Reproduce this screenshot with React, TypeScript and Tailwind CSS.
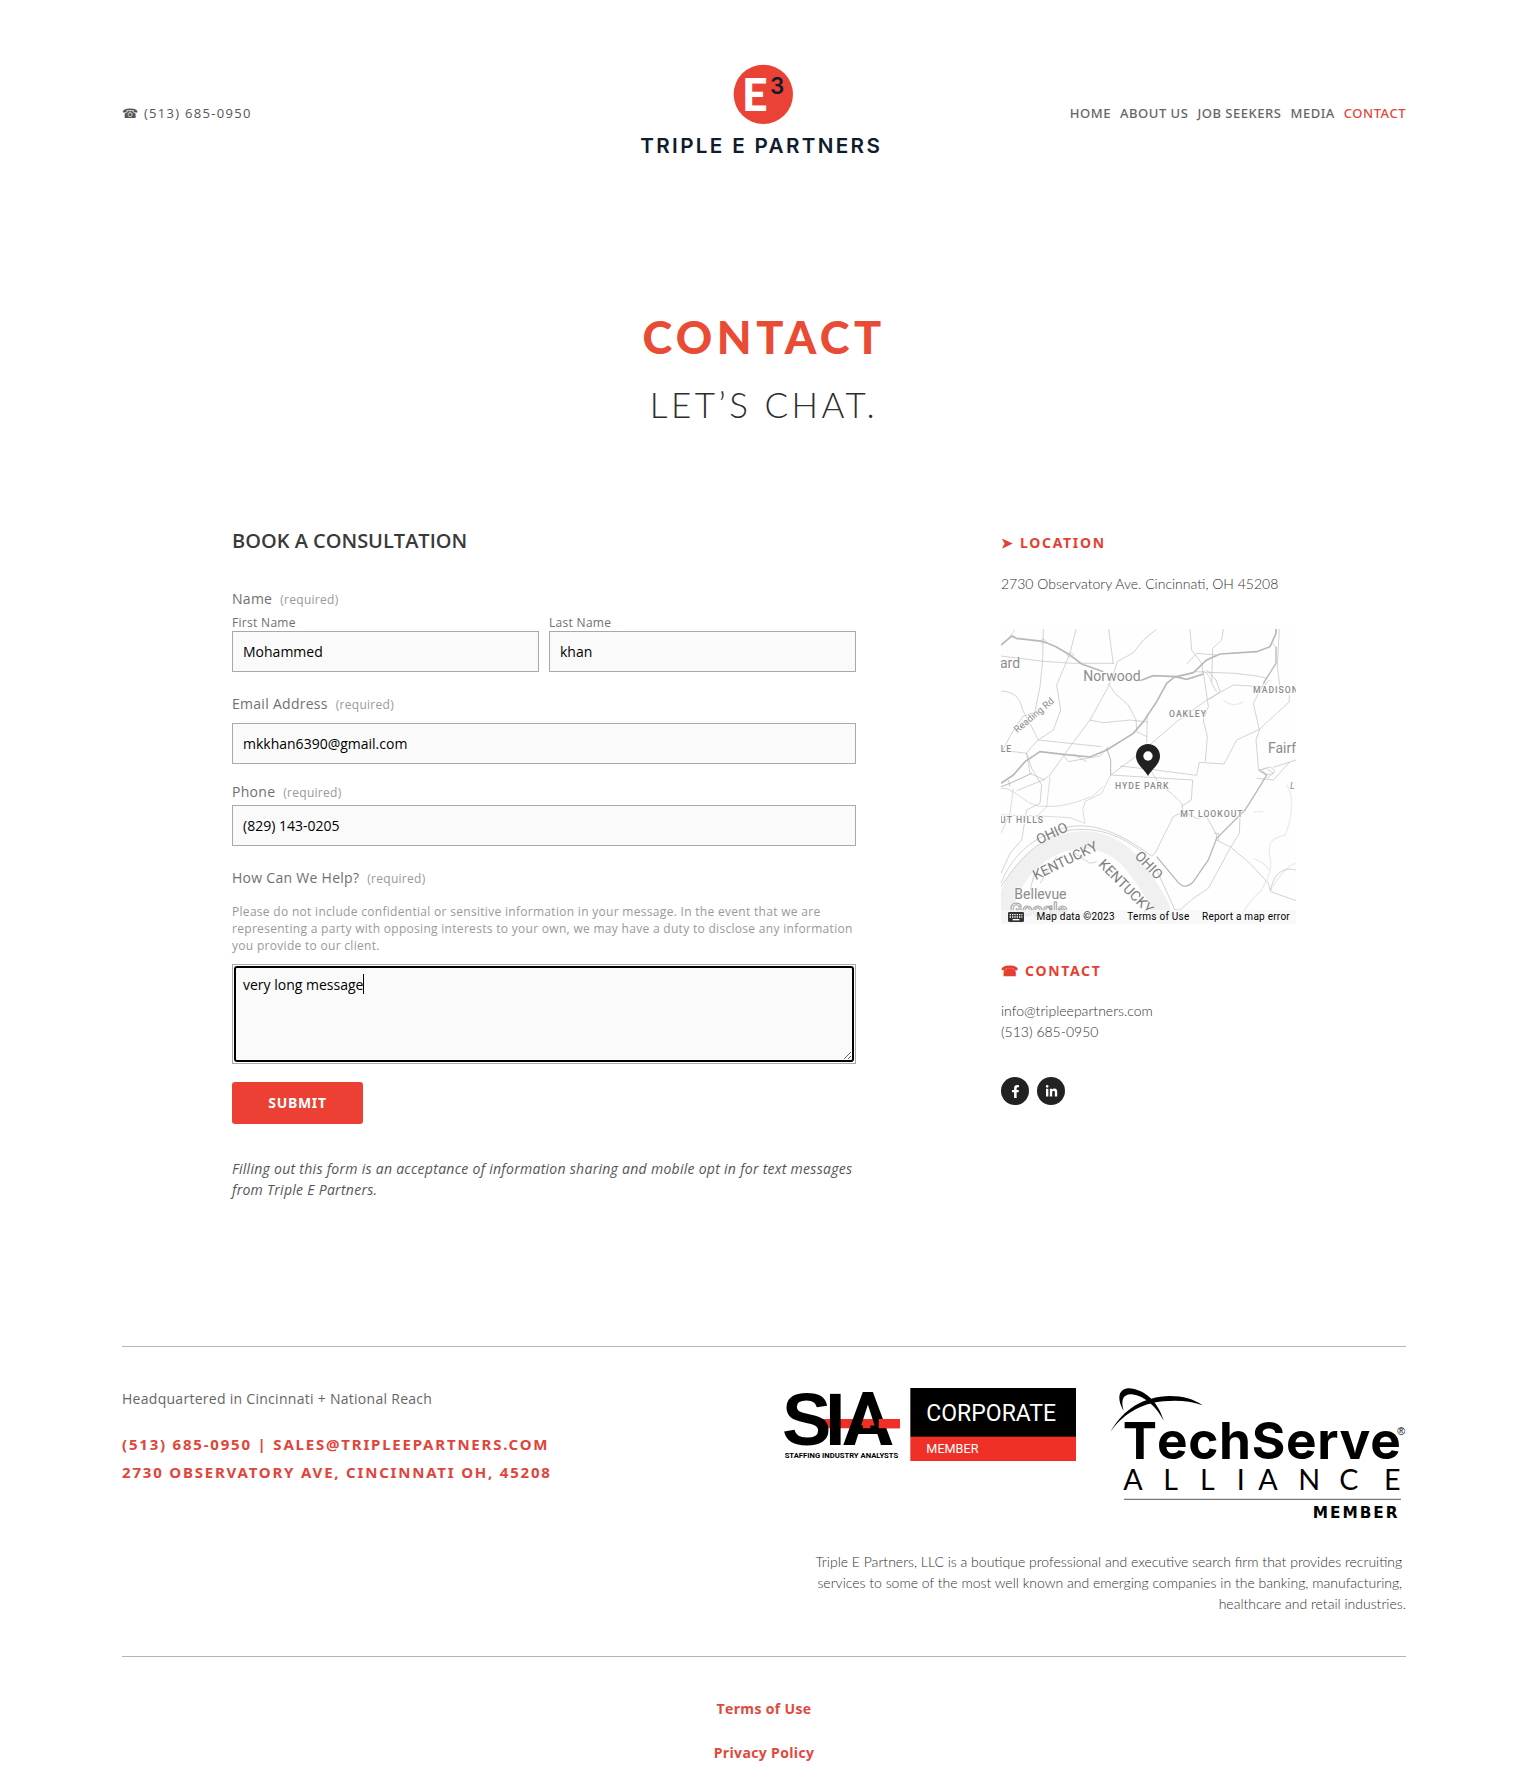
import React, { useState } from 'react';
import { FaFacebookF, FaLinkedinIn } from 'react-icons/fa';

const NAV = ['Home', 'About Us', 'Job Seekers', 'Media', 'Contact'];

function BrandLogo() {
  return (
    <svg viewBox="60 66 747 306" className="h-[102px] w-[249px]" role="img" aria-label="Triple E Partners">
      <circle cx="430" cy="163" r="89" fill="#ea4335" />
      <text x="366" y="212" fontFamily="Lato" fontWeight="900" fontSize="134" fill="#fff">E</text>
      <text x="450" y="163" fontFamily="Inter" fontWeight="600" fontSize="67" fill="#101c2e">3</text>
      <text x="61" y="340" fontFamily="Inter" fontWeight="600" fontSize="62" letterSpacing="7" fill="#101c2e">TRIPLE E PARTNERS</text>
    </svg>
  );
}

function LocationMap() {
  return (
    <div className="relative aspect-square w-full overflow-hidden">
      <svg viewBox="33 327 885 885" className="block h-full w-full" role="img" aria-label="Map of Hyde Park, Cincinnati">
        <rect x="33" y="327" width="885" height="885" fill="#fefefe" />
        <path d="M35 1200C60 1050 170 958 285 960C390 963 440 1040 490 1120C515 1160 525 1190 530 1225" fill="none" stroke="#f0f0f0" strokeWidth="52" />
        <path d="M30 1120V1215H120C60 1190 50 1150 62 1105Z" fill="#f0f0f0" />
        <path d="M918 1030C890 1035 860 1080 840 1112M890 795C915 830 905 900 885 945C850 955 835 960 838 1000C850 1050 835 1070 815 1110C780 1140 755 1180 745 1212M700 540q30 25 60 5M790 875h30M790 1015q40 15 50 40" fill="none" stroke="#ececec" strokeWidth="4" />
        <g fill="none" stroke="#bdbdbd" strokeWidth="2">
          <path d="M33 408L160 424L250 430H372M160 327L158 420L150 500L134 580M258 327L240 400L200 495L212 570L190 630L142 662L108 700M356 327L370 432M500 327L460 360L430 398L382 425L368 470L355 500L300 600L240 680L180 765L160 780L80 812" />
          <path d="M355 490L375 520L415 555L438 600L440 635M33 513C70 515 90 530 98 570L130 630L145 660L240 670L335 680M33 700L65 640L98 590L135 575M33 690L110 700L125 745L155 795L150 850L110 870L95 960L60 1000L33 1060" />
          <path d="M298 600L340 608L420 600L472 606M472 590L470 670M440 635L470 650M485 670L560 605L650 540L730 495L820 500L838 480M362 765L430 715L485 670M362 765L608 780L604 840L575 858M390 738L480 748L620 766L628 727L702 732L740 660L808 628L860 580L898 545V525" />
          <path d="M362 765L335 820L285 845L278 870L285 910M33 805C70 800 100 850 145 858C220 865 260 845 305 830L340 800M180 770L170 860L140 890M70 805L60 880L33 940M33 885L150 888L240 893L285 910" opacity=".8" />
          <path d="M480 748L510 795L545 820L575 850L580 875L550 890L495 1000L485 1008M575 870L620 895L650 890L680 945L678 960L720 980L780 1030L835 1090L842 1115L918 1142M750 890L748 940L720 985L655 1105L610 1135L570 1170H555L500 1050" />
          <path d="M33 1090C60 1020 120 945 240 920C330 905 420 960 485 1008M33 1100C80 1030 130 965 230 932C340 915 410 960 470 1005M600 327L605 390L635 430L645 490L655 560L640 600L652 650L646 725M700 327L695 360L668 385L665 490L680 515M868 327L862 440L870 500" />
          <path d="M590 433L620 400L680 405M615 455L735 460L800 468L830 475M655 540L690 515L678 480L650 450M830 475L790 550L808 630L798 660L806 750L830 745L850 760L830 775M918 720L850 742M800 775L850 780L900 725M842 1112C850 1060 880 1040 918 1050M110 700L120 760L165 780M60 800L55 780" />
          <path d="M255 1000L300 1030L320 1025M150 1090L200 1010M135 1055L120 1110M220 705L235 725L330 708L355 680M672 940h14v24M250 702L290 725" />
        </g>
        <g fill="none" stroke="#b8b8b8" strokeWidth="5">
          <path d="M33 375L65 348L80 355L158 364L198 380L240 405L275 432L340 455M450 482L490 467L560 470L610 458L650 420L690 402L800 395L840 380L858 340V327" />
          <path d="M33 790L70 765L105 725L150 695L220 703L300 711L350 690L430 640L460 605L500 545L530 490L555 470L590 478L640 462" />
          <path d="M858 380V430L820 490M806 750L830 765L800 815L765 870L680 955L655 1020L610 1085Q585 1110 565 1088L500 1010" strokeWidth="4" />
          <path d="M350 685L362 720V765M33 800L60 790L125 760" strokeWidth="3" />
        </g>
        <path d="M60 350L75 330M65 345L85 360M150 364q10-14 18 0q-8 12-18 0M230 405q12-14 22 0q-10 12-22 0M845 365l15 20M635 455q20 0 28 30M815 750q30-20 40 5q-20 20-40-5" fill="none" stroke="#c4c4c4" strokeWidth="2" />
        <g fontFamily="Roboto" fill="#8c8c8c" stroke="#fefefe" strokeWidth="5" paintOrder="stroke">
          <text x="30" y="444" fontSize="42">ard</text>
          <text x="280" y="484" fontSize="42">Norwood</text>
          <text x="834" y="699" fontSize="42">Fairf</text>
          <text x="73" y="1137" fontSize="42">Bellevue</text>
          <text x="900" y="806" fontSize="28" fontStyle="italic">L</text>
          <g fontSize="26" letterSpacing="3" fontWeight="500">
            <text x="789" y="519">MADISON</text>
            <text x="537" y="591">OAKLEY</text>
            <text x="375" y="807">HYDE PARK</text>
            <text x="571" y="891">MT LOOKOUT</text>
            <text x="32" y="696">LE</text>
            <text x="30" y="909">UT HILLS</text>
          </g>
          <text transform="translate(82 640) rotate(-40)" fontSize="29">Reading Rd</text>
          <g fontSize="42" fill="#7d7d7d" stroke="none">
            <text transform="translate(147 974) rotate(-25)">OHIO</text>
            <text transform="translate(137 1081) rotate(-26)">KENTUCKY</text>
            <text transform="translate(323 1035) rotate(45)">KENTUCKY</text>
            <text transform="translate(432 1010) rotate(46)">OHIO</text>
          </g>
        </g>
        <text x="60" y="1188" fontFamily="Roboto" fontWeight="500" fontSize="54" fill="#fff" stroke="#a0a0a0" strokeWidth="3">Google</text>
        <path d="M474 672c-20 0-36 16-36 36c0 26 24 38 36 60c12-22 36-34 36-60c0-20-16-36-36-36z" fill="#212121" />
        <circle cx="474" cy="708" r="14" fill="#fff" />
      </svg>
      <div className="absolute inset-x-0 bottom-0 flex h-[14px] items-center justify-between bg-[#f7f7f7]/80 pr-[6px] pl-[7px] font-['Roboto'] text-[10px] leading-[14px] tracking-wide whitespace-nowrap text-black">
        <button type="button" aria-label="Keyboard shortcuts">
          <svg viewBox="0 0 48 30" className="block h-[10px] w-4">
            <rect width="48" height="30" rx="4" fill="#333" />
            <path d="M5 8h38M5 15h38" stroke="#fff" strokeWidth="4" strokeDasharray="4 3" />
            <path d="M14 23h20" stroke="#fff" strokeWidth="4" />
          </svg>
        </button>
        <span>Map data ©2023</span>
        <a href="#map-terms">Terms of Use</a>
        <a href="#map-error">Report a map error</a>
      </div>
    </div>
  );
}

function SiaLogo() {
  return (
    <svg viewBox="42 55 876 219" className="h-[73px] w-[292px]" role="img" aria-label="SIA Staffing Industry Analysts Corporate Member">
      <path d="M150 148H390V176H150Z" fill="#ee3026" />
      <g fontWeight="700" fontSize="222" fill="#000">
        <text x="36" y="225" fontFamily="Liberation Sans">S</text>
        <text x="165" y="225" fontFamily="Liberation Sans">I</text>
        <text x="219" y="225" fontFamily="Roboto">A</text>
      </g>
      <path d="M326 148H390V176H326ZM279 148h22v28h-22z" fill="#ee3026" />
      <text x="44" y="265" fontFamily="Roboto" fontWeight="700" fontSize="23" fill="#000">STAFFING INDUSTRY ANALYSTS</text>
      <rect x="421" y="55" width="497" height="147" fill="#000" />
      <rect x="421" y="201" width="497" height="73" fill="#ee3026" />
      <text x="469" y="153" fontFamily="Roboto" fontSize="69" fill="#fff">CORPORATE</text>
      <text x="469" y="251" fontFamily="Roboto" fontSize="38" fill="#fff">MEMBER</text>
    </svg>
  );
}

function TechServeLogo() {
  return (
    <svg viewBox="60 52 888 399" className="h-[133px] w-[296px]" role="img" aria-label="TechServe Alliance Member">
      <path d="M61 184C100 115 160 78 240 76C280 76 310 85 338 104C300 90 260 88 220 92C150 98 95 135 61 184Z" fill="#000" />
      <path d="M101 120C80 85 85 55 115 53C165 55 205 95 221 150C200 110 165 75 125 71C98 70 92 90 101 120Z" fill="#000" />
      <g fill="#000">
        <text y="265" fontFamily="Inter" fontWeight="700" fontSize="154">
          <tspan x="98">T</tspan><tspan x="201" letterSpacing="2">echServe</tspan>
        </text>
        <text y="358" fontSize="86" x="100 220 330 440 505 625 748 882" fontFamily="Lato">ALLIANCE</text>
        <text x="922" y="192" fontFamily="Liberation Sans" fontSize="32">®</text>
      </g>
      <path d="M102 386H933" stroke="#777" strokeWidth="4" />
      <text x="668" y="443" fontFamily="DejaVu Sans" fontWeight="700" fontSize="46" letterSpacing="6" fill="#000">MEMBER</text>
    </svg>
  );
}

const labelClass = 'block text-sm leading-5 tracking-[0.02em] text-[#707070]';
const inputClass = 'block h-[41px] w-full border border-[#a9a9a9] bg-[#fafafa] px-[10px] text-sm text-black outline-none';
const sideHeading = "font-['Noto_Sans'] text-sm leading-6 font-bold tracking-[0.12em] text-[#e63f33] uppercase";
const thinText = "font-['Lato'] text-sm leading-[21px] font-light text-[#333]";

function Required() {
  return <span className="ml-2 text-xs text-[#999]">(required)</span>;
}

export default function App() {
  const [message, setMessage] = useState('very long message');

  return (
    <div className="min-h-screen bg-white pr-[107px] pb-[25px] pl-[122px] font-['Open_Sans',sans-serif]">
      <header className="grid grid-cols-[1fr_auto_1fr] items-center pt-[62px]">
        <a href="tel:5136850950" className="text-[13px] leading-5 tracking-widest text-[#555]">☎ (513) 685-0950</a>
        <a href="#home"><BrandLogo /></a>
        <nav className="flex justify-end gap-[9px] font-['Noto_Sans'] text-[13px] leading-5 font-medium tracking-[0.04em] whitespace-nowrap text-[#666] uppercase">
          {NAV.map((item) => (
            <a key={item} href={`#${item.toLowerCase().replace(' ', '-')}`} className={item === 'Contact' ? 'text-[#e0483c]' : ''}>{item}</a>
          ))}
        </nav>
      </header>

      <main>
        <div className="mt-[145px] text-center font-['Lato']">
          <h1 className="text-[45px] leading-[56px] font-black tracking-widest text-[#e94b35] uppercase">Contact</h1>
          <p className="mt-[15px] text-[35px] leading-[48px] font-light tracking-widest text-[#2d2d2d] uppercase">Let’s chat.</p>
        </div>

        <div className="mx-auto mt-[99px] grid max-w-[1064px] grid-cols-[minmax(0,1fr)_295px] gap-[145px]">
          <form onSubmit={(e) => e.preventDefault()}>
            <h2 className="text-xl leading-7 font-semibold text-[#3a3a3a]">BOOK A CONSULTATION</h2>
            <fieldset className="mt-[34px]">
              <legend className={labelClass}>Name<Required /></legend>
              <div className="mt-[6px] grid grid-cols-2 gap-[10px]">
                <label className="block text-xs leading-4 tracking-wide text-[#707070]">First Name
                  <input className={`${inputClass} tracking-normal`} type="text" defaultValue="Mohammed" />
                </label>
                <label className="block text-xs leading-4 tracking-wide text-[#707070]">Last Name
                  <input className={`${inputClass} tracking-normal`} type="text" defaultValue="khan" />
                </label>
              </div>
            </fieldset>
            <label htmlFor="email" className={`${labelClass} mt-[22px]`}>Email Address<Required /></label>
            <input id="email" className={`${inputClass} mt-[9px]`} type="email" defaultValue="mkkhan6390@gmail.com" />
            <label htmlFor="phone" className={`${labelClass} mt-[18px]`}>Phone<Required /></label>
            <input id="phone" className={`${inputClass} mt-[3px]`} type="tel" defaultValue="(829) 143-0205" />
            <label htmlFor="message" className={`${labelClass} mt-[22px]`}>How Can We Help?<Required /></label>
            <p id="message-hint" className="mt-[15px] text-xs leading-[17px] tracking-wide text-[#999]">
              Please do not include confidential or sensitive information in your message. In the event that we are representing a party with opposing interests to your own, we may have a duty to disclose any information you provide to our client.
            </p>
            <div className="relative mt-[10px] border border-[#a9a9a9] p-px">
              <textarea id="message" aria-describedby="message-hint" value={message} onChange={(e) => setMessage(e.target.value)} className="block h-[96px] w-full rounded-[3px] border-2 border-black bg-[#fafafa] px-[7px] py-[7px] text-sm leading-5 text-black caret-transparent outline-none" />
              <div aria-hidden="true" className="pointer-events-none absolute top-[9px] left-[10px] text-sm leading-5 whitespace-pre">
                <span className="inline-block border-r border-black text-transparent">{message}</span>
              </div>
            </div>
            <button type="submit" className="mt-[18px] h-[42px] w-[131px] rounded-[3px] bg-[#ec4034] font-['Noto_Sans'] text-sm font-bold tracking-wider text-white">SUBMIT</button>
            <p className="mt-[34px] text-sm leading-[21px] tracking-[0.02em] text-[#555] italic">
              Filling out this form is an acceptance of information sharing and mobile opt in for text messages from Triple E Partners.
            </p>
          </form>

          <aside className="pt-1">
            <h3 className={sideHeading}>➤ Location</h3>
            <p className={`${thinText} mt-[18px] whitespace-nowrap`}>2730 Observatory Ave. Cincinnati, OH 45208</p>
            <div className="mt-[35px]"><LocationMap /></div>
            <h3 className={`${sideHeading} mt-[35px]`}>☎ Contact</h3>
            <p className={`${thinText} mt-[17px]`}>
              <a href="mailto:info@tripleepartners.com">info@tripleepartners.com</a><br />
              <a href="tel:5136850950">(513) 685-0950</a>
            </p>
            <div className="mt-[35px] flex gap-2">
              <a href="#facebook" aria-label="Facebook" className="flex size-7 items-center justify-center rounded-full bg-[#222] text-[13px] text-white"><FaFacebookF /></a>
              <a href="#linkedin" aria-label="LinkedIn" className="flex size-7 items-center justify-center rounded-full bg-[#222] text-[13px] text-white"><FaLinkedinIn /></a>
            </div>
          </aside>
        </div>
      </main>

      <footer className="mt-[146px]">
        <div className="flex justify-between border-y border-[#b5b5b5] pt-[41px] pb-[42px]">
          <div>
            <p className="text-sm leading-[21px] tracking-[0.02em] text-[#666]">Headquartered in Cincinnati + National Reach</p>
            <p className="mt-[21px] font-['Noto_Sans'] text-[15px] leading-7 font-bold tracking-[0.12em] text-[#e0443a] uppercase">
              <a href="tel:5136850950">(513) 685-0950</a> | <a href="mailto:sales@tripleepartners.com">Sales@tripleepartners.com</a><br />
              2730 Observatory Ave, Cincinnati OH, 45208
            </p>
          </div>
          <div className="w-[622px]">
            <div className="flex items-start justify-between">
              <SiaLogo />
              <TechServeLogo />
            </div>
            <p className={`${thinText} mt-[30px] text-right`}>
              Triple E Partners, LLC is a boutique professional and executive search firm that provides recruiting&nbsp;<br />
              services to some of the most well known and emerging companies in the banking, manufacturing,&nbsp;<br />
              healthcare and retail industries.
            </p>
          </div>
        </div>
        <nav className="mt-[42px] flex flex-col items-center gap-6 text-sm leading-5 font-bold tracking-wide text-[#e0483c]">
          <a href="#terms">Terms of Use</a>
          <a href="#privacy">Privacy Policy</a>
        </nav>
      </footer>
    </div>
  );
}
